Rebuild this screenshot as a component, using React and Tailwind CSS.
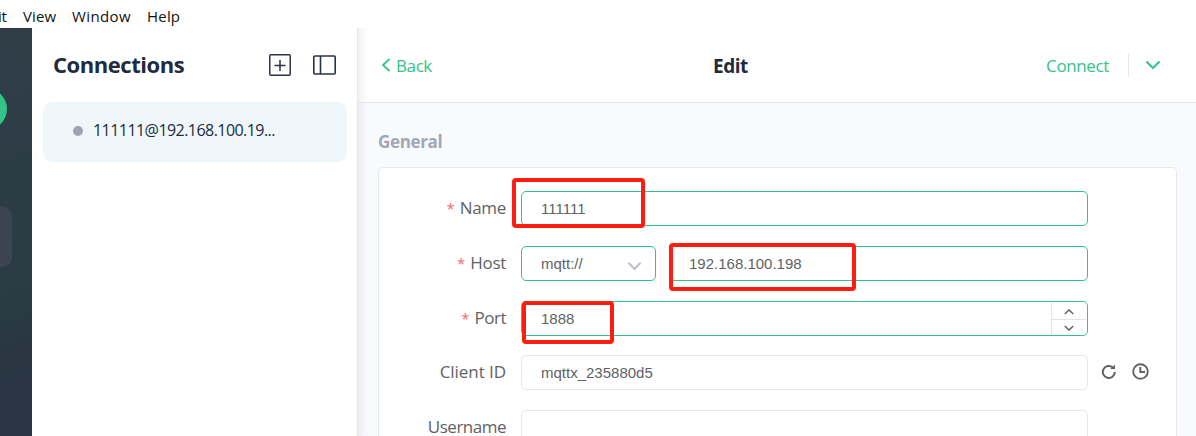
import React from "react";

const INPUT = "flex h-[35px] items-center rounded-[5px] border bg-white pt-px pl-[19px] font-['Liberation_Sans'] text-[15px] text-[#606266]";

function Label({ children, required, tracking }) {
  return (
    <div className="flex w-[127px] shrink-0 justify-end gap-[5px] pb-px text-[17px] leading-[34px] text-[#606266]">
      {required && <span className="text-[15px] text-[#f56c6c]">*</span>}
      <span className={`whitespace-nowrap ${tracking}`}>{children}</span>
    </div>
  );
}

function Mark({ className }) {
  return <div className={`pointer-events-none absolute z-10 rounded-[4px] border-4 border-[#fd1d11] ${className}`} />;
}

function Chevron({ className, d, width = 2 }) {
  return (
    <svg className={className} viewBox="0 0 16 10" fill="none" stroke="currentColor" strokeWidth={width}>
      <path d={d || "M1.5 1.5L8 8L14.5 1.5"} />
    </svg>
  );
}

export default function App() {
  return (
    <div className="relative flex h-[436px] w-[1196px] flex-col overflow-hidden bg-white font-['Open_Sans',sans-serif] text-[#212b3d]">
      <nav className="flex h-7 shrink-0 items-start pt-[5px] text-[15px] leading-[22px] text-[#111]">
        <span className="w-[23px] whitespace-nowrap"><span className="-ml-[2px] tracking-[-0.2px]">it</span></span>
        <span className="w-[49px] tracking-[0.1px]">View</span>
        <span className="w-[75px] tracking-[0.4px]">Window</span>
        <span className="tracking-[0.2px]">Help</span>
      </nav>
      <div className="flex min-h-0 flex-1">
        <aside className="relative w-8 shrink-0 overflow-hidden bg-linear-[160deg,#303e48_0%,#293b43_68%,#293642_78%,#2a3544_100%]">
          <div className="absolute top-[60px] -left-[35px] size-[42px] rounded-full bg-[#34c388]" />
          <div className="absolute top-[179px] -left-[48px] h-[60px] w-[60px] rounded-[9px] bg-[#3b4453]" />
        </aside>
        <section className="w-[326px] shrink-0 border-r border-[#e4e7ed] px-[11px]">
          <header className="flex h-[74px] items-center pl-[10px]">
            <h1 className="w-[216px] pb-[2px] text-[22px] font-bold tracking-[-0.45px]">Connections</h1>
            <svg className="h-[22px] w-[22px] shrink-0" viewBox="0 0 22 22" fill="none" stroke="#293347" strokeWidth="1.5">
              <rect x="0.8" y="0.8" width="20.4" height="20.4" rx="1" />
              <path d="M5.5 11.5H16.5M11 6V17" />
            </svg>
            <svg className="ml-[22px] h-[20px] w-[23px] shrink-0" viewBox="0 0 23 20" fill="none" stroke="#293347" strokeWidth="1.6">
              <rect x="0.8" y="1" width="21.4" height="18" rx="1" />
              <path d="M7.5 1V19" />
            </svg>
          </header>
          <div className="flex h-[60px] w-[304px] items-center rounded-[10px] bg-[#eff7fb] pb-[4px] pl-[30px]">
            <span className="mt-[2px] size-[10px] rounded-full bg-[#9da3b3]" />
            <span className="ml-[10px] whitespace-nowrap text-[16px] font-medium tracking-[-0.55px]">111111@192.168.100.19...</span>
          </div>
        </section>
        <main className="flex min-w-0 flex-1 flex-col bg-[#f9fafe] shadow-[inset_10px_0_10px_-8px_rgba(60,80,100,0.12)]">
          <header className="flex h-[75px] shrink-0 items-center border-b border-[#e4e7ef] bg-white pr-[35px] pl-[23px] shadow-[inset_10px_0_10px_-8px_rgba(60,80,100,0.12)]">
            <div className="flex w-[332px] items-center text-[#34c388]">
              <svg className="h-[14px] w-[10px]" viewBox="0 0 10 14" fill="none" stroke="currentColor" strokeWidth="1.8"><path d="M8.5 1L2 7L8.5 13" /></svg>
              <span className="ml-[5px] pt-px text-[17px] tracking-[-0.4px]">Back</span>
            </div>
            <h2 className="flex-1 pt-[2px] text-[19px] font-bold tracking-[-0.45px]">Edit</h2>
            <span className="pt-[2px] text-[17px] tracking-[-0.37px] text-[#34c388]">Connect</span>
            <span className="ml-[19px] h-[23px] w-px bg-[#e4e7ed]" />
            <Chevron className="ml-[16px] h-[10px] w-[16px] text-[#34c388]" />
          </header>
          <div className="pr-[19px] pl-[20px]">
            <h3 className="h-[64px] pt-[26px] text-[17px] leading-[26px] font-bold tracking-[-0.35px] text-[#a1a8b3]">General</h3>
            <div className="h-[320px] w-[799px] rounded-[5px] border border-[#e4e7ed] bg-white pt-[23px]">
              <div className="flex flex-col gap-5">
                <div className="flex gap-[15px]">
                  <Label required tracking="tracking-[-0.3px]">Name</Label>
                  <div className={`${INPUT} w-[567px] border-[#34c388]`}>111111</div>
                </div>
                <div className="flex gap-[15px]">
                  <Label required tracking="tracking-[-0.3px]">Host</Label>
                  <div className={`${INPUT} w-[135px] justify-between border-[#34c388] pr-[13px]`}>
                    mqtt://
                    <Chevron className="mt-[3px] h-[10px] w-[15px] text-[#c0c4cc]" width={2.4} />
                  </div>
                  <div className={`${INPUT} -ml-[2px] w-[419px] border-[#34c388]`}>192.168.100.198</div>
                </div>
                <div className="flex gap-[15px]">
                  <Label required tracking="tracking-[-0.5px]">Port</Label>
                  <div className={`${INPUT} w-[567px] justify-between border-[#34c388]`}>
                    1888
                    <div className="mr-px flex h-[32px] w-[35px] flex-col border-l border-[#dfe3ea] text-[#606266]">
                      <div className="flex h-[17px] items-center justify-center border-b border-[#dfe3ea] pt-[2px]">
                        <Chevron className="h-[6px] w-[10px]" width={2.4} d="M1 8.5L8 1.5L15 8.5" />
                      </div>
                      <div className="flex flex-1 items-center justify-center">
                        <Chevron className="h-[6px] w-[10px]" width={2.4} d="M1 1.5L8 8.5L15 1.5" />
                      </div>
                    </div>
                  </div>
                </div>
                <div className="-mt-px flex items-center gap-[15px]">
                  <Label tracking="tracking-[-0.05px]">Client ID</Label>
                  <div className={`${INPUT} w-[567px] border-[#e4e7ed]`}>mqttx_235880d5</div>
                  <div className="-ml-[2px] flex items-center gap-[16px] pb-[2px] text-[#606266]">
                    <svg className="size-[15px]" viewBox="0 0 15 15" fill="none" stroke="currentColor" strokeWidth="2">
                      <path d="M13.8 8A6 6 0 1 1 11.8 3.5" />
                      <path d="M9.2 4.9H14V0.8Z" fill="currentColor" stroke="none" />
                    </svg>
                    <svg className="size-[17px]" viewBox="0 0 17 17" fill="none" stroke="currentColor" strokeWidth="1.9">
                      <circle cx="8.5" cy="8.5" r="7.3" />
                      <path d="M8.3 4V9H13" />
                    </svg>
                  </div>
                </div>
                <div className="flex gap-[15px]">
                  <Label tracking="tracking-[-0.5px]">Username</Label>
                  <div className={`${INPUT} w-[567px] border-[#e4e7ed]`} />
                </div>
              </div>
            </div>
          </div>
        </main>
      </div>
      <Mark className="top-[178px] left-[512px] h-[50px] w-[133px]" />
      <Mark className="top-[243px] left-[669px] h-[48px] w-[187px]" />
      <Mark className="top-[301px] left-[522px] h-[43px] w-[92px]" />
    </div>
  );
}
